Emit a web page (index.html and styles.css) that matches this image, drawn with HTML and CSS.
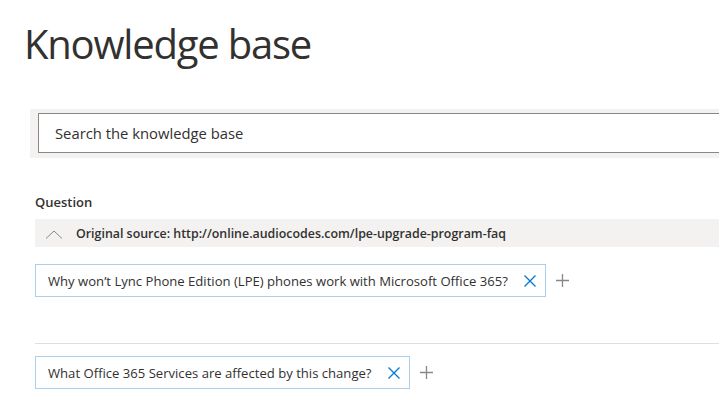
FILE: index.html
```html
<!DOCTYPE html>
<html lang="en">
<head>
<meta charset="utf-8">
<title>Knowledge base</title>
<link rel="stylesheet" href="styles.css">
</head>
<body>
<main class="page">
  <h1 class="title">Knowledge base</h1>
  <div class="search-strip">
    <div class="search-box">Search the knowledge base</div>
  </div>
  <section class="qna">
    <div class="label">Question</div>
    <div class="source-row">
      <svg class="chevron" width="18" height="9" viewBox="0 0 18 9"><path d="M1 8.5 L9 1 L17 8.5" fill="none" stroke="#8a8886" stroke-width="1"/></svg>
      <span class="source-text">Original source: http://online.audiocodes.com/lpe-upgrade-program-faq</span>
    </div>
    <div class="chip-row first">
      <div class="chip">
        <span class="chip-text">Why won’t Lync Phone Edition (LPE) phones work with Microsoft Office 365?</span>
        <svg class="x" width="12" height="12" viewBox="0 0 12 12"><path d="M0.5 0.5 L11.5 11.5 M11.5 0.5 L0.5 11.5" stroke="#0078d4" stroke-width="1.3" fill="none"/></svg>
      </div>
      <svg class="plus" width="13" height="13" viewBox="0 0 13 13"><path d="M6.5 0 V13 M0 6.5 H13" stroke="#8a8886" stroke-width="1.3" fill="none"/></svg>
    </div>
    <div class="divider"></div>
    <div class="chip-row second">
      <div class="chip">
        <span class="chip-text">What Office 365 Services are affected by this change?</span>
        <svg class="x" width="12" height="12" viewBox="0 0 12 12"><path d="M0.5 0.5 L11.5 11.5 M11.5 0.5 L0.5 11.5" stroke="#0078d4" stroke-width="1.3" fill="none"/></svg>
      </div>
      <svg class="plus" width="13" height="13" viewBox="0 0 13 13"><path d="M6.5 0 V13 M0 6.5 H13" stroke="#8a8886" stroke-width="1.3" fill="none"/></svg>
    </div>
  </section>
</main>
</body>
</html>
```
FILE: styles.css
```css
html, body {
  margin: 0;
  padding: 0;
  background: #ffffff;
}
body {
  font-family: "Open Sans", "Noto Sans", sans-serif;
  color: #323130;
  width: 719px;
  height: 409px;
  overflow: hidden;
}
.page {
  display: flex;
  flex-direction: column;
}
.title {
  margin: 0;
  padding: 16px 0 0 24px;
  font-size: 40px;
  font-weight: 400;
  line-height: 56px;
  color: #323130;
  letter-spacing: -1.2px;
}
.search-strip {
  margin: 37px 0 0 30px;
  background: #f3f2f1;
  padding: 4px 0 5px 8px;
}
.search-box {
  height: 38px;
  border: 1px solid #8a8886;
  border-right: none;
  background: #fff;
  display: flex;
  align-items: center;
  padding-left: 16px;
  font-size: 14.8px;
  color: #323130;
}
.qna {
  margin: 35px 0 0 35px;
  display: flex;
  flex-direction: column;
}
.label {
  font-size: 13px;
  font-weight: 600;
  line-height: 18px;
}
.source-row {
  margin-top: 8px;
  height: 28px;
  background: #f3f2f1;
  display: flex;
  align-items: center;
  gap: 13px;
  padding-left: 10px;
}
.chevron {
  display: block;
  margin-top: 2px;
}
.source-text {
  font-size: 12.4px;
  font-weight: 600;
}
.chip-row {
  display: flex;
  align-items: center;
  gap: 10px;
}
.chip-row.first {
  margin-top: 17px;
}
.chip-row.second {
  margin-top: 12px;
}
.chip {
  height: 31px;
  border: 1px solid #a9d0ee;
  display: flex;
  align-items: center;
  padding: 0 9px 0 12px;
  gap: 16px;
}
.chip-text {
  font-size: 13.1px;
}
.x, .plus {
  display: block;
}
.divider {
  margin-top: 46px;
  height: 1px;
  background: #e1dfdd;
}
```
